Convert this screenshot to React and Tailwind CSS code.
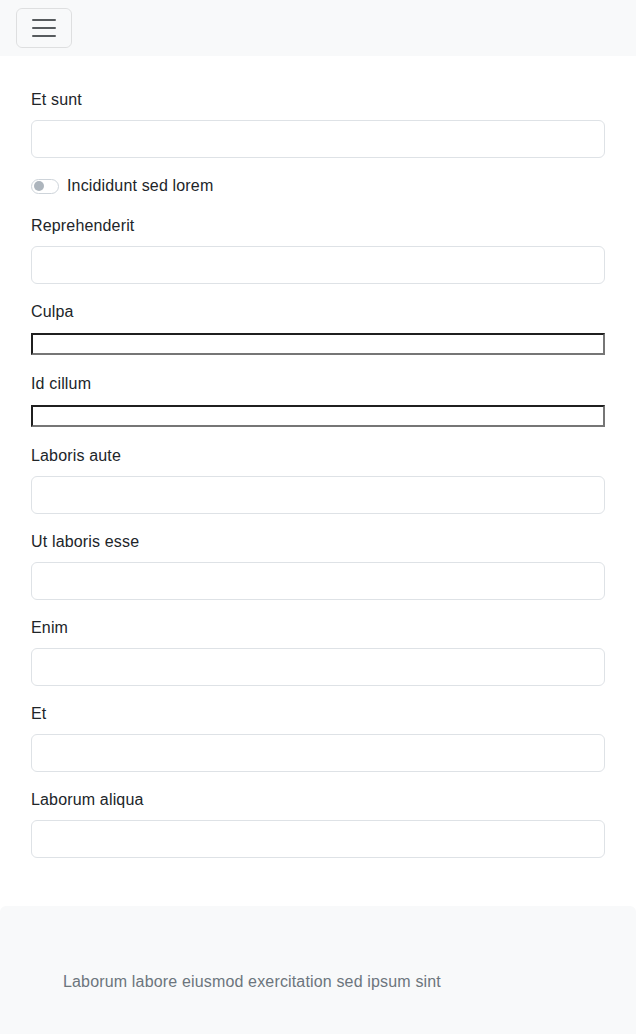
import React from "react";

const font = { fontFamily: '"Liberation Sans", Arial, sans-serif', letterSpacing: "0.01em" };

function TextField({ label }) {
	return (
		<div className="mb-4">
			<label className="block mb-2 leading-6 text-[16px] text-[#212529]">{label}</label>
			<input
				type="text"
				className="block w-full h-[38px] px-3 bg-white border border-[#dee2e6] rounded-[6px] outline-none"
			/>
		</div>
	);
}

function RawField({ label }) {
	return (
		<div className="mb-4">
			<label className="block mb-2 leading-6 text-[16px] text-[#212529]">{label}</label>
			<div className="h-6 pt-px">
				<input
					type="text"
					className="block w-full h-[22px] bg-white border-2 border-t-[#1f1f1f] border-l-[#1f1f1f] border-r-[#767676] border-b-[#767676] outline-none"
				/>
			</div>
		</div>
	);
}

export default function App() {
	return (
		<div className="min-h-screen bg-white text-[#212529]" style={font}>
			<nav className="h-14 bg-[#f8f9fa] px-4 py-2">
				<button className="w-14 h-10 border border-[rgba(0,0,0,0.1)] rounded-[6px] flex items-center justify-center">
					<svg width="30" height="30" viewBox="0 0 30 30">
						<path
							d="M4 7h22M4 15h22M4 23h22"
							stroke="rgba(33,37,41,0.75)"
							strokeWidth="2"
							strokeLinecap="round"
						/>
					</svg>
				</button>
			</nav>

			<main className="px-[31px] pt-8 pb-8">
				<TextField label="Et sunt" />
				<div className="mb-4 flex items-center h-6">
					<span className="relative w-[28px] h-[15px] rounded-full border border-[#ced4da] bg-white">
						<span className="absolute left-[2px] top-[1.5px] w-[10px] h-[10px] rounded-full bg-[#adb5bd]" />
					</span>
					<span className="ml-2 leading-6 text-[16px]">Incididunt sed lorem</span>
				</div>
				<TextField label="Reprehenderit" />
				<RawField label="Culpa" />
				<RawField label="Id cillum" />
				<TextField label="Laboris aute" />
				<TextField label="Ut laboris esse" />
				<TextField label="Enim" />
				<TextField label="Et" />
				<TextField label="Laborum aliqua" />
			</main>

			<footer className="bg-[#f8f9fa] rounded-t-[6px] pt-16 pb-16 px-[63px]">
				<p className="leading-6 text-[16px] text-[#6c757d]">
					Laborum labore eiusmod exercitation sed ipsum sint
				</p>
			</footer>
		</div>
	);
}
